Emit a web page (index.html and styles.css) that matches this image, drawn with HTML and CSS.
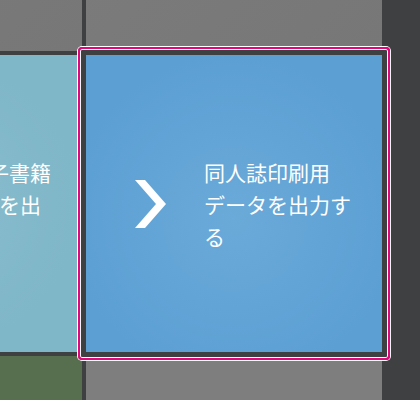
FILE: index.html
```html
<!DOCTYPE html>
<html lang="ja">
<head>
<meta charset="utf-8">
<title>出力メニュー</title>
<link rel="stylesheet" href="styles.css">
</head>
<body>
<main class="board">
  <div class="tile tile-gray"></div>
  <div class="tile tile-gray"></div>
  <div class="tile tile-teal">
    <svg class="chev" viewBox="0 0 31 48" aria-hidden="true"><polygon points="0,0 10,0 31,24 10,48 0,48 21,24"/></svg>
    <p class="label">汎用の電子書籍ZIPデータを出力する</p>
  </div>
  <div class="tile tile-blue is-focused">
    <svg class="chev" viewBox="0 0 31 48" aria-hidden="true"><polygon points="0,0 10,0 31,24 10,48 0,48 21,24"/></svg>
    <p class="label">同人誌印刷用データを出力する</p>
  </div>
  <div class="tile tile-green"></div>
  <div class="tile tile-gray2"></div>
</main>
</body>
</html>
```

FILE: styles.css
```css
html, body {
  margin: 0;
  padding: 0;
  width: 420px;
  height: 400px;
  overflow: hidden;
  background: #3f4042;
}

.board {
  display: grid;
  grid-template-columns: 296px 296px;
  grid-auto-rows: 297px;
  gap: 4px;
  margin-left: -214px;
  margin-top: -246px;
  width: 596px;
}

.tile {
  display: flex;
  align-items: center;
  padding-left: 49px;
  box-sizing: border-box;
  font-family: "Noto Sans CJK JP", "Noto Sans", sans-serif;
  color: #ffffff;
}

.tile-gray {
  background: linear-gradient(135deg, #7d7d7e 0%, #777778 100%);
}

.tile-gray2 {
  background: #7e7e7f;
}

.tile-teal {
  background: radial-gradient(circle at 50% 50%, #88bdcd 0%, #7fb6c8 70%);
}

.tile-green {
  background: #576e4f;
}

.tile-blue {
  background: radial-gradient(circle at 50% 55%, #6aaad9 0%, #5c9fd3 75%);
}

.chev {
  width: 31px;
  height: 48px;
  flex: none;
  fill: #ffffff;
  margin-right: 38px;
}

.label {
  margin: 0;
  width: 150px;
  font-size: 21px;
  line-height: 32px;
  font-weight: 400;
  line-break: strict;
}

.is-focused {
  position: relative;
  z-index: 1;
  box-shadow: 0 0 0 5px #3f4042;
}

.is-focused::after {
  content: "";
  position: absolute;
  top: -8px;
  left: -8px;
  right: -8px;
  bottom: -8px;
  border: 2px solid #e2057c;
  border-radius: 4px;
  box-shadow: 0 0 0 1px #ffffff, inset 0 0 0 1px #ffffff;
  pointer-events: none;
}
```
